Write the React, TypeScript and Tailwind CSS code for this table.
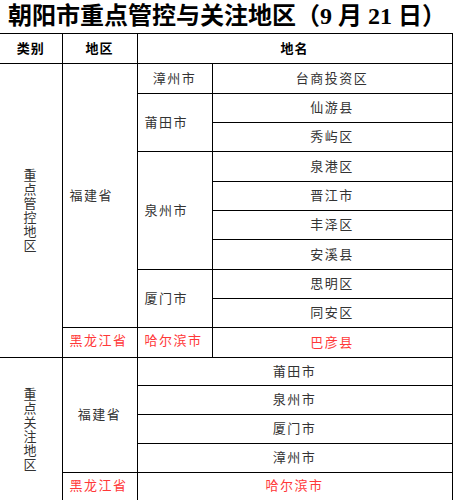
const cjk = { fontFamily: '"Liberation Serif", "Noto Sans CJK SC", serif' };

type Cell = {
  text: string;
  rowSpan?: number;
  colSpan?: number;
  red?: boolean;
  align?: "left" | "center";
  top?: boolean;
  first?: boolean;
  vertical?: boolean;
};

const VText = ({ text }: { text: string }) => (
  <div className="flex flex-col items-center leading-[14px]">
    {text.split("").map((c, i) => (
      <span key={i}>{c}</span>
    ))}
  </div>
);

const Td = ({ c, h }: { c: Cell; h: number }) => {
  const cls = [
    "border border-black p-0 text-[13px] tracking-[1.5px]",
    c.first ? "border-l-0" : "",
    c.red ? "text-[#ff3838]" : "text-[#333]",
    c.align === "left" ? "text-left pl-[7px]" : "text-center",
    c.top ? "align-top pt-[3px]" : "align-middle",
  ].join(" ");
  return (
    <td className={cls} rowSpan={c.rowSpan} colSpan={c.colSpan} style={c.rowSpan ? undefined : { height: h }}>
      {c.vertical ? <VText text={c.text} /> : c.text}
    </td>
  );
};

const rows: { h: number; cells: Cell[] }[] = [
  {
    h: 30,
    cells: [
      { text: "重点管控地区", rowSpan: 10, first: true, vertical: true },
      { text: "福建省", rowSpan: 9, align: "left" },
      { text: "漳州市" },
      { text: "台商投资区" },
    ],
  },
  { h: 29, cells: [{ text: "莆田市", rowSpan: 2, align: "left" }, { text: "仙游县" }] },
  { h: 29, cells: [{ text: "秀屿区" }] },
  { h: 30, cells: [{ text: "泉州市", rowSpan: 4, align: "left" }, { text: "泉港区" }] },
  { h: 29, cells: [{ text: "晋江市" }] },
  { h: 29, cells: [{ text: "丰泽区" }] },
  { h: 30, cells: [{ text: "安溪县" }] },
  { h: 29, cells: [{ text: "厦门市", rowSpan: 2, align: "left" }, { text: "思明区" }] },
  { h: 29, cells: [{ text: "同安区" }] },
  {
    h: 30,
    cells: [
      { text: "黑龙江省", red: true, align: "left", top: true },
      { text: "哈尔滨市", red: true, align: "left", top: true },
      { text: "巴彦县", red: true },
    ],
  },
  {
    h: 28,
    cells: [
      { text: "重点关注地区", rowSpan: 5, first: true, vertical: true },
      { text: "福建省", rowSpan: 4 },
      { text: "莆田市", colSpan: 2 },
    ],
  },
  { h: 29, cells: [{ text: "泉州市", colSpan: 2 }] },
  { h: 29, cells: [{ text: "厦门市", colSpan: 2 }] },
  { h: 29, cells: [{ text: "漳州市", colSpan: 2 }] },
  {
    h: 29,
    cells: [
      { text: "黑龙江省", red: true, align: "left", top: true },
      { text: "哈尔滨市", red: true, colSpan: 2, top: true },
    ],
  },
];

export default function App() {
  return (
    <div className="w-[457px] h-[500px] overflow-hidden bg-white" style={cjk}>
      <h1 className="h-[33px] pl-[8px] pt-[1px] text-[24px] font-bold leading-[30px] text-black whitespace-nowrap">
        朝阳市重点管控与关注地区（9 月 21 日）
      </h1>
      <table className="border-collapse table-fixed w-[452px]">
        <colgroup>
          <col className="w-[62px]" />
          <col className="w-[75px]" />
          <col className="w-[75px]" />
          <col className="w-[240px]" />
        </colgroup>
        <tbody>
          <tr>
            <th className="h-[30px] border border-black border-l-0 p-0 text-[13px] font-bold tracking-[1px] text-black">类别</th>
            <th className="border border-black p-0 text-[13px] font-bold tracking-[1px] text-black">地区</th>
            <th colSpan={2} className="border border-black p-0 text-[13px] font-bold tracking-[1px] text-black">
              地名
            </th>
          </tr>
          {rows.map((r, i) => (
            <tr key={i}>
              {r.cells.map((c, j) => (
                <Td key={j} c={c} h={r.h} />
              ))}
            </tr>
          ))}
        </tbody>
      </table>
    </div>
  );
}
